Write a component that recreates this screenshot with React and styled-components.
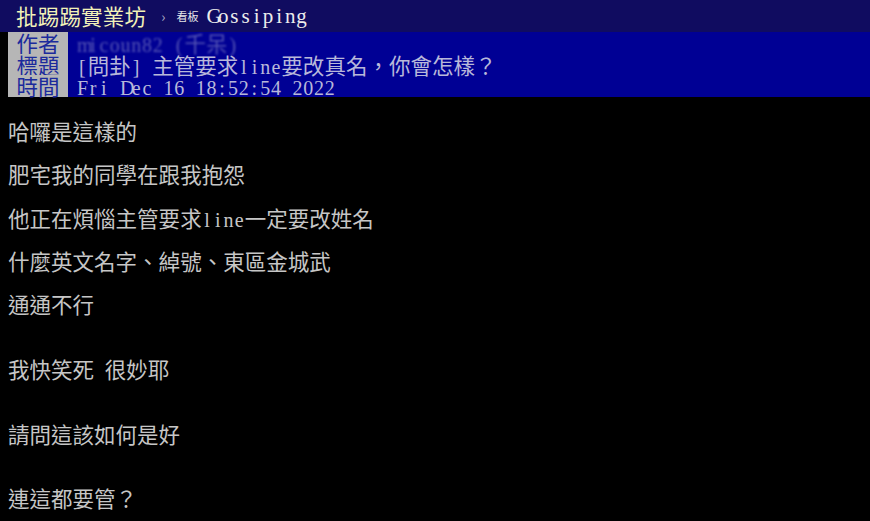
import React from "react";
import styled, { createGlobalStyle } from "styled-components";

const GlobalStyle = createGlobalStyle`
  html, body {
    margin: 0;
    padding: 0;
    background: #000;
  }
  body {
    font-family: "Noto Sans CJK TC", "Noto Sans CJK SC", sans-serif;
  }
`;

const Page = styled.div`
  width: 870px;
  height: 521px;
  overflow: hidden;
  background: #000;
  color: #c6c6c6;
`;

const TopBar = styled.div`
  height: 32px;
  background: #100c60;
  display: flex;
  align-items: center;
  padding-left: 16px;
  box-sizing: border-box;
`;

const Logo = styled.span`
  font-size: 21.5px;
  line-height: 1;
  color: #f2f2b8;
  letter-spacing: 0.2px;
`;

const Crumb = styled.span`
  color: #b0b0c8;
  font-size: 14px;
  margin: 0 11px 0 15px;
`;

const BoardLabel = styled.span`
  color: #e6e6e6;
  font-size: 11px;
  margin-right: 8px;
`;

const BoardName = styled.span`
  color: #ececec;
  line-height: 1;
`;

const Meta = styled.div`
  margin-left: 8px;
  background: #000094;
  display: flex;
  flex-direction: column;
`;

const MetaLine = styled.div`
  display: flex;
  height: 21.7px;
  line-height: 21.7px;
  font-size: 21.5px;
  white-space: nowrap;
`;

const Tag = styled.span`
  width: 60px;
  flex: none;
  text-align: center;
  background: #b6b6b6;
  color: #1b2a9c;
`;

const Value = styled.span`
  margin-left: 9px;
  color: #b8b8da;
  opacity: ${(p) => (p.$masked ? 0.45 : 1)};
  filter: ${(p) => (p.$masked ? "blur(0.8px)" : "none")};
`;

// one half-width terminal cell holding a serif latin glyph
const Cell = styled.span`
  display: inline-block;
  width: ${(p) => p.$w || 10.75}px;
  text-align: center;
  font-family: "Liberation Serif", serif;
  font-size: ${(p) => p.$size || 20}px;
  white-space: pre;
`;

const Content = styled.div`
  padding: 1.6px 0 0 8px;
  font-size: 21.5px;
`;

const Line = styled.div`
  height: 21.6px;
  line-height: 21.6px;
  white-space: nowrap;
`;

// half-width chars take one cell each, CJK (1em wide) takes two
const cells = (text, w, size) =>
  Array.from(text).map((ch, i) =>
    ch.charCodeAt(0) < 0x7f ? (
      <Cell key={i} $w={w} $size={size}>
        {ch}
      </Cell>
    ) : (
      ch
    )
  );

const meta = [
  { tag: "作者", value: "micoun82 (千呆)", masked: true },
  { tag: "標題", value: "[問卦] 主管要求line要改真名，你會怎樣？" },
  { tag: "時間", value: "Fri Dec 16 18:52:54 2022" },
];

const body = [
  "",
  "哈囉是這樣的",
  "",
  "肥宅我的同學在跟我抱怨",
  "",
  "他正在煩惱主管要求line一定要改姓名",
  "",
  "什麼英文名字、綽號、東區金城武",
  "",
  "通通不行",
  "",
  "",
  "我快笑死 很妙耶",
  "",
  "",
  "請問這該如何是好",
  "",
  "",
  "連這都要管？",
  "",
];

export default function App() {
  return (
    <Page>
      <GlobalStyle />
      <TopBar>
        <Logo>批踢踢實業坊</Logo>
        <Crumb>›</Crumb>
        <BoardLabel>看板</BoardLabel>
        <BoardName>{cells("Gossiping", 11.2, 21)}</BoardName>
      </TopBar>
      <Meta>
        {meta.map((m) => (
          <MetaLine key={m.tag}>
            <Tag>{m.tag}</Tag>
            <Value $masked={m.masked}>{cells(m.value)}</Value>
          </MetaLine>
        ))}
      </Meta>
      <Content>
        {body.map((text, i) => (
          <Line key={i}>{cells(text)}</Line>
        ))}
      </Content>
    </Page>
  );
}
